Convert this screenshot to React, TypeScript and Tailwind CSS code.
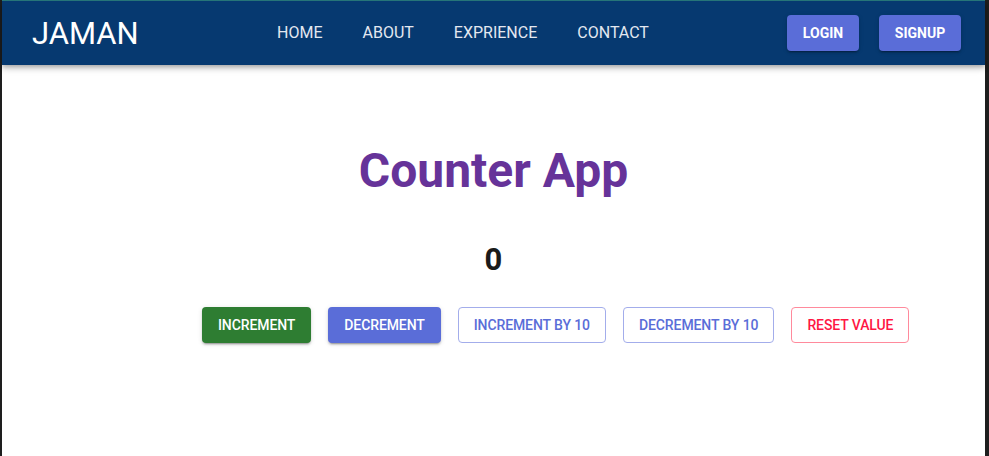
export default function App() {
  const font = { fontFamily: 'Roboto, "Liberation Sans", sans-serif' };
  return (
    <div className="flex h-screen w-full bg-[#1e1e1e]" style={font}>
      {/* editor gutter strip */}
      <div className="w-[2px] shrink-0 bg-[#1e1e1e]" />

      <div className="flex flex-1 flex-col bg-white">
        <div className="h-px bg-[#2a7d80]" />

        {/* ── NAVBAR ── */}
        <header className="relative z-10 flex h-[64px] items-center bg-[#063970] pl-[30px] pr-[24px] shadow-[0_2px_4px_-1px_rgba(0,0,0,0.2),0_4px_5px_0_rgba(0,0,0,0.14),0_1px_10px_0_rgba(0,0,0,0.12)]">
          <div className="w-[245px] text-[31px] leading-none text-white">JAMAN</div>
          <nav className="flex gap-10 text-[16px] text-[#e3e8f0]">
            <span>HOME</span>
            <span>ABOUT</span>
            <span>EXPRIENCE</span>
            <span>CONTACT</span>
          </nav>
          <div className="ml-auto flex gap-5">
            <button className="h-[36px] w-[72px] rounded bg-[#5a6dd8] text-[14px] font-bold text-white shadow-[0_3px_1px_-2px_rgba(0,0,0,0.2),0_2px_2px_0_rgba(0,0,0,0.14),0_1px_5px_0_rgba(0,0,0,0.12)]">
              LOGIN
            </button>
            <button className="h-[36px] w-[82px] rounded bg-[#5a6dd8] text-[14px] font-bold text-white shadow-[0_3px_1px_-2px_rgba(0,0,0,0.2),0_2px_2px_0_rgba(0,0,0,0.14),0_1px_5px_0_rgba(0,0,0,0.12)]">
              SIGNUP
            </button>
          </div>
        </header>

        {/* ── COUNTER ── */}
        <main className="flex flex-col items-center pt-[78px]">
          <h1 className="text-[48px] font-bold leading-[56px] text-[#663399]">Counter App</h1>
          <div className="mt-[43px] text-[31px] font-bold leading-[36px] text-[#1a1a1a]">0</div>
          <div className="mt-[29px] flex w-full gap-[17px] pl-[200px] tracking-[-0.1px]">
            <button className="h-[36px] rounded bg-[#2e7d32] px-4 text-[14px] font-medium text-white shadow-[0_3px_1px_-2px_rgba(0,0,0,0.2),0_2px_2px_0_rgba(0,0,0,0.14),0_1px_5px_0_rgba(0,0,0,0.12)]">
              INCREMENT
            </button>
            <button className="h-[36px] rounded bg-[#5a6dd8] px-4 text-[14px] font-medium text-white shadow-[0_3px_1px_-2px_rgba(0,0,0,0.2),0_2px_2px_0_rgba(0,0,0,0.14),0_1px_5px_0_rgba(0,0,0,0.12)]">
              DECREMENT
            </button>
            <button className="h-[36px] rounded border border-[#a3adeb] px-[15px] text-[14px] font-medium text-[#5a6dd8]">
              INCREMENT BY 10
            </button>
            <button className="h-[36px] rounded border border-[#a3adeb] px-[15px] text-[14px] font-medium text-[#5a6dd8]">
              DECREMENT BY 10
            </button>
            <button className="h-[36px] rounded border border-[#ff8a9c] px-[15px] text-[14px] font-medium text-[#ff1744]">
              RESET VALUE
            </button>
          </div>
        </main>
      </div>

      <div className="w-[4px] shrink-0 bg-[#1e1e1e]" />
    </div>
  );
}
